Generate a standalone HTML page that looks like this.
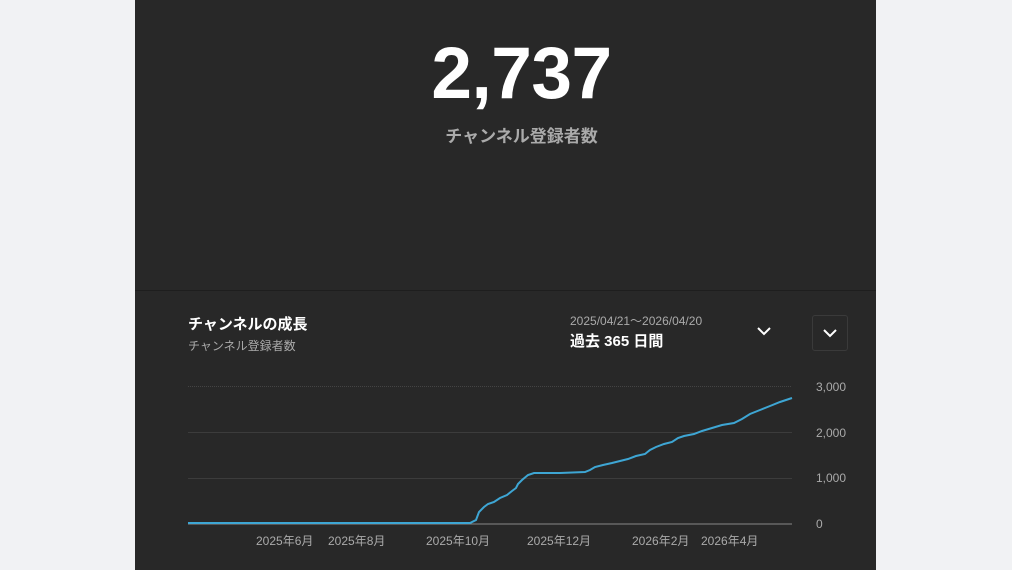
<!DOCTYPE html>
<html><head><meta charset="utf-8"><style>
body{margin:0;width:1012px;height:570px;background:#f1f2f4;overflow:hidden;font-family:"Liberation Sans","Noto Sans CJK JP",sans-serif;}
.card{position:absolute;left:135px;top:0;width:741px;height:570px;background:#282828;}
.big{position:absolute;left:16px;width:741px;top:32px;text-align:center;color:#fff;font-size:73px;font-weight:bold;letter-spacing:-0.5px;}
.sub{position:absolute;left:16px;width:741px;top:122px;text-align:center;color:#aaa;font-size:17px;font-weight:bold;}
.div{position:absolute;left:0;top:290px;width:741px;height:1px;background:#1e1e1e;}
.t1{position:absolute;left:53px;top:313px;color:#fff;font-size:15px;font-weight:bold;}
.t2{position:absolute;left:53px;top:337px;color:#aaa;font-size:12px;}
.d1{position:absolute;left:435px;top:312px;color:#aaa;font-size:12px;}
.d2{position:absolute;left:435px;top:330px;color:#fff;font-size:15px;font-weight:bold;}
.btn{position:absolute;left:677px;top:315px;width:36px;height:36px;border:1px solid #3a3a3a;border-radius:3px;box-sizing:border-box;}
</style></head><body>
<div class="card">
<div class="big">2,737</div>
<div class="sub">チャンネル登録者数</div>
<div class="div"></div>
<div class="t1">チャンネルの成長</div>
<div class="t2">チャンネル登録者数</div>
<div class="d1">2025/04/21〜2026/04/20</div>
<div class="d2">過去 365 日間</div>
<svg style="position:absolute;left:620px;top:324px" width="18" height="14"><path d="M3 4l6 6 6-6" stroke="#fff" stroke-width="2" fill="none"/></svg>
<div class="btn"><svg style="position:absolute;left:8px;top:10px" width="18" height="14"><path d="M3 4l6 6 6-6" stroke="#fff" stroke-width="2" fill="none"/></svg></div>
</div>
<svg style="position:absolute;left:0;top:0" width="1012" height="570" font-family="Liberation Sans, Noto Sans CJK JP, sans-serif">
<line x1="188" y1="386.5" x2="792" y2="386.5" stroke="#444" stroke-dasharray="1 1"/>
<line x1="188" y1="432.5" x2="792" y2="432.5" stroke="#3c3c3c"/>
<line x1="188" y1="478.5" x2="792" y2="478.5" stroke="#3c3c3c"/>
<line x1="188" y1="524" x2="792" y2="524" stroke="#888"/>
<g fill="#aaa" font-size="12">
<text x="816" y="391">3,000</text><text x="816" y="437">2,000</text><text x="816" y="482">1,000</text><text x="816" y="528">0</text>
<text x="256" y="545">2025年6月</text><text x="328" y="545">2025年8月</text><text x="426" y="545">2025年10月</text><text x="527" y="545">2025年12月</text><text x="632" y="545">2026年2月</text><text x="701" y="545">2026年4月</text>
</g>
<polyline fill="none" stroke="#3ea6d4" stroke-width="2" points="188,523 470,523 476,520 479,512 484,507 488,504 494,502 500,498 507,495 512,491 516,488 518,484 522,480 528,475 534,473 560,473 585,472 590,470 595,467 603,465 612,463 620,461 628,459 636,456 645,454 650,450 656,447 664,444 672,442 678,438 684,436 694,434 702,431 712,428 722,425 734,423 742,419 750,414 760,410 770,406 780,402 786,400 792,398"/>
</svg>
</body></html>
